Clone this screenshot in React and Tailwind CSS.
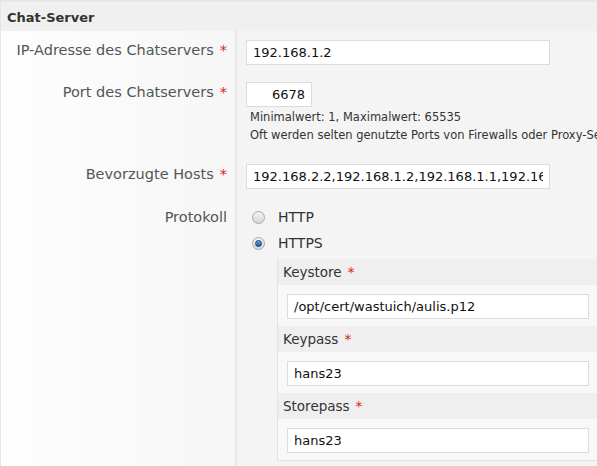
// App.jsx

const font = { fontFamily: '"DejaVu Sans", Verdana, sans-serif' };

const Star = () => <span className="text-[#e02020] ml-[6px]">*</span>;

const Label = ({ children, required, className = '' }) => (
    <div className={`w-[237px] shrink-0 border-l border-r-2 border-[#e6e6e6] bg-gradient-to-r from-[#fefefe] to-[#f6f6f6] pr-[8px] text-right text-[14.5px] leading-[18px] text-[#555] ${className}`}>
        {children}
        {required && <Star />}
    </div>
);

const TextInput = ({ value, className = '' }) => (
    <input
        readOnly
        defaultValue={value}
        className={`h-[25px] border border-[#dcdcdc] bg-white px-[6px] text-[13px] text-[#111] outline-none ${className}`}
        style={font}
    />
);

const Radio = ({ checked, label }) => (
    <div className="flex h-[26px] items-center">
        <span className="ml-[15px] flex h-[13px] w-[13px] items-center justify-center rounded-full border border-[#a9a9a9] bg-gradient-to-b from-[#f4f4f4] to-[#d6d6d6]">
            {checked && (
                <span className="h-[7px] w-[7px] rounded-full border border-[#1b3f66] bg-gradient-to-b from-[#5ab0ea] to-[#0b5da5]" />
            )}
        </span>
        <span className="ml-[13px] text-[14px] text-[#333]">{label}</span>
    </div>
);

const SubField = ({ title, value }) => (
    <>
        <div className="flex h-[26px] items-center bg-[#efefef] pl-[5px] text-[13.5px] text-[#333]">
            {title}
            <Star />
        </div>
        <div className="bg-[#f8f8f8] pb-[7px] pl-[9px] pr-[8px] pt-[9px]">
            <TextInput value={value} className="w-full" />
        </div>
    </>
);

const App = () => {
    return (
        <div className="h-[466px] w-[597px] overflow-hidden whitespace-nowrap bg-white" style={font}>
            {/* Header */}
            <div className="border-l border-t-2 border-[#e6e6e6] bg-[#f0f0f0] pl-[6px] pt-[6px] h-[31px] text-[13px] font-bold text-[#333]">
                Chat-Server
            </div>

            {/* IP */}
            <div className="flex">
                <Label required className="pt-[10px]">IP-Adresse des Chatservers</Label>
                <div className="flex-1 bg-[#f4f4f4] pb-[8px] pl-[9px] pt-[9px]">
                    <TextInput value="192.168.1.2" className="w-[304px]" />
                </div>
            </div>

            {/* Port */}
            <div className="flex">
                <Label required className="pt-[10px]">Port des Chatservers</Label>
                <div className="flex-1 overflow-hidden bg-[#f4f4f4] pb-[11px] pl-[9px] pt-[9px]">
                    <TextInput value="6678" className="w-[66px] text-right" />
                    <div className="mt-[1px] pl-[4px] text-[11.5px] leading-[18px] text-[#333]">
                        <p>Minimalwert: 1, Maximalwert: 65535</p>
                        <p>Oft werden selten genutzte Ports von Firewalls oder Proxy-Se</p>
                    </div>
                </div>
            </div>

            {/* Hosts */}
            <div className="flex">
                <Label required className="pt-[10px]">Bevorzugte Hosts</Label>
                <div className="flex-1 bg-[#f4f4f4] pb-[9px] pl-[9px] pt-[9px]">
                    <TextInput value="192.168.2.2,192.168.1.2,192.168.1.1,192.168.1.3" className="w-[304px]" />
                </div>
            </div>

            {/* Protokoll */}
            <div className="flex">
                <Label className="pt-[10px]">Protokoll</Label>
                <div className="flex-1 bg-[#f4f4f4] pb-[8px] pt-[6px]">
                    <Radio label="HTTP" />
                    <Radio checked label="HTTPS" />
                    <div className="ml-[40px] mt-[3px] border-b border-l border-[#e3e3e3]">
                        <SubField title="Keystore" value="/opt/cert/wastuich/aulis.p12" />
                        <SubField title="Keypass" value="hans23" />
                        <SubField title="Storepass" value="hans23" />
                    </div>
                </div>
            </div>
        </div>
    );
};

export default App;
